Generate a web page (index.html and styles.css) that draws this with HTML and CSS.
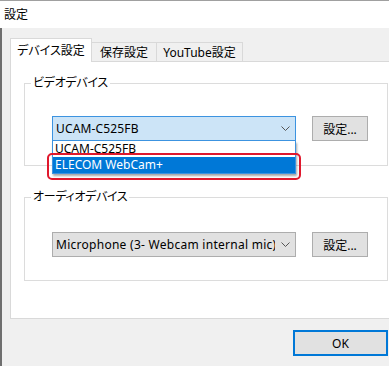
FILE: index.html
```html
<!DOCTYPE html>
<html lang="ja">
<head>
    <meta charset="UTF-8">
    <meta name="viewport" content="width=device-width, initial-scale=1.0">
    <title>設定</title>
    <link rel="stylesheet" href="styles.css">
</head>
<body>

<div class="window">
    <div class="titlebar">設定</div>
    <div class="client">
        <div class="tabs">
            <div class="tab tab-device active">デバイス設定</div>
            <div class="tab tab-save">保存設定</div>
            <div class="tab tab-youtube">YouTube設定</div>
        </div>

        <div class="panel">
            <!-- Video device -->
            <fieldset class="group group-video">
                <legend>ビデオデバイス</legend>
                <div class="row">
                    <div class="combo open">
                        <span class="combo-text">UCAM-C525FB</span>
                        <svg class="chevron" width="9" height="5" viewBox="0 0 9 5">
                            <polyline points="0.5,0.5 4.5,4.5 8.5,0.5" fill="none" stroke="#555" stroke-width="1"/>
                        </svg>
                        <div class="dropdown">
                            <div class="item">UCAM-C525FB</div>
                            <div class="item selected">ELECOM WebCam+</div>
                        </div>
                        <div class="highlight"></div>
                    </div>
                    <button class="btn btn-settings">設定...</button>
                </div>
            </fieldset>

            <!-- Audio device -->
            <fieldset class="group group-audio">
                <legend>オーディオデバイス</legend>
                <div class="row">
                    <div class="combo">
                        <span class="combo-text wide">Microphone (3- Webcam internal mic)</span>
                        <svg class="chevron" width="9" height="5" viewBox="0 0 9 5">
                            <polyline points="0.5,0.5 4.5,4.5 8.5,0.5" fill="none" stroke="#555" stroke-width="1"/>
                        </svg>
                    </div>
                    <button class="btn btn-settings">設定...</button>
                </div>
            </fieldset>
        </div>

        <div class="footer">
            <button class="btn btn-ok">OK</button>
        </div>
    </div>
</div>

</body>
</html>
```

FILE: styles.css
```css
body {
    margin: 0;
    background-color: #f0f0f0;
    font-family: "Noto Sans", "Noto Sans CJK JP", sans-serif;
    font-size: 12px;
    font-feature-settings: "palt";
    color: #000;
    overflow: hidden;
}
.window {
    height: 366px;
    border-top: 1px solid #a0a0a0;
    box-sizing: border-box;
    overflow: hidden;
}
.titlebar {
    height: 27px;
    line-height: 28px;
    padding-left: 4px;
    background: white;
}
.client {
    height: 338px;
    box-sizing: border-box;
    border-left: 2px solid #6f6f6f;
    padding: 10px 0 0 8px;
}

/* Tabs */
.tabs {
    display: flex;
    align-items: flex-end;
    height: 23px;
}
.tab {
    height: 19px;
    line-height: 19px;
    box-sizing: border-box;
    border: 1px solid #d9d9d9;
    border-bottom: none;
    background: #f0f0f0;
    text-align: center;
    margin-left: -1px;
}
.tab.active {
    position: relative;
    z-index: 1;
    height: 24px;
    line-height: 23px;
    margin-bottom: -1px;
    margin-left: 0;
    background: white;
}
.tab-device { width: 82px; }
.tab-save { width: 66px; }
.tab-youtube { width: 87px; }

/* Page */
.panel {
    width: 392px;
    height: 258px;
    box-sizing: border-box;
    background: white;
    border: 1px solid #d9d9d9;
    padding-left: 13px;
}
.group {
    width: 364px;
    box-sizing: border-box;
    margin: 0;
    padding: 0;
    border: 1px solid #dcdcdc;
    min-width: 0;
}
.group legend {
    margin-left: 6px;
    padding: 0 2px;
    line-height: 16px;
    letter-spacing: -0.3px;
}
.group-video {
    margin-top: 13px;
}
.group-video .row {
    margin: 25px 0 24px 27px;
}
.group-audio {
    margin-top: 23px;
}
.group-audio .row {
    margin: 27px 0 23px 27px;
}
.row {
    display: flex;
    align-items: center;
}

/* Combo box */
.combo {
    position: relative;
    display: flex;
    align-items: center;
    width: 244px;
    height: 25px;
    box-sizing: border-box;
    border: 1px solid #adadad;
    background: #e1e1e1;
}
.combo.open {
    border-color: #3c93e0;
    background: #cce4f7;
}
.combo-text {
    flex: 1;
    overflow: hidden;
    white-space: nowrap;
    padding-left: 3px;
    letter-spacing: 0.15px;
}
.combo-text.wide {
    letter-spacing: 0.27px;
}
.chevron {
    flex: none;
    margin: 0 5px 0 6px;
}
.dropdown {
    position: absolute;
    top: 24px;
    left: -1px;
    width: 244px;
    box-sizing: border-box;
    background: white;
    border: 1px solid #3c93e0;
    border-top: none;
    box-shadow: 1px 2px 2px rgba(0, 0, 0, 0.35);
}
.item {
    height: 16px;
    line-height: 16px;
    padding-left: 2px;
    white-space: nowrap;
}
.item.selected {
    background: #0078d7;
    color: white;
}
.highlight {
    position: absolute;
    left: -6px;
    top: 36px;
    width: 254px;
    height: 27px;
    box-sizing: border-box;
    border: 2px solid #e0182d;
    border-radius: 5px;
}

/* Buttons */
.btn {
    font-family: inherit;
    font-size: 12px;
    font-feature-settings: "palt";
    color: #000;
    background: #e1e1e1;
    border: 1px solid #adadad;
    padding: 0;
    box-sizing: border-box;
}
.btn-settings {
    width: 56px;
    height: 25px;
    margin-left: 16px;
}
.footer {
    display: flex;
    justify-content: flex-end;
    padding: 11px 1px 0 0;
}
.btn-ok {
    width: 95px;
    height: 26px;
    border: 2px solid #0078d7;
}
```
